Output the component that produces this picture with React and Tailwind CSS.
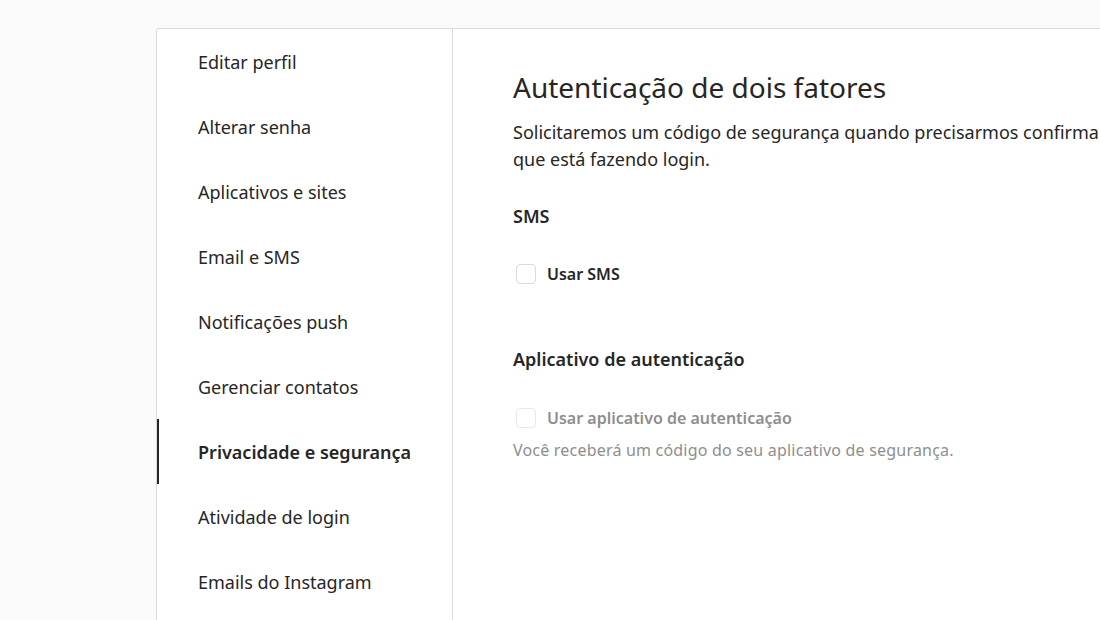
import React, { useState } from "react";

const navItems = [
    "Editar perfil",
    "Alterar senha",
    "Aplicativos e sites",
    "Email e SMS",
    "Notificações push",
    "Gerenciar contatos",
    "Privacidade e segurança",
    "Atividade de login",
    "Emails do Instagram",
];

const Checkbox = ({ checked, onChange, disabled }) => (
    <button
        type="button"
        disabled={disabled}
        onClick={onChange}
        className={`w-5 h-5 rounded-[4px] border border-[#dbdbdb] bg-white flex items-center justify-center ${disabled ? "opacity-60" : ""}`}
    >
        {checked && <span className="w-2.5 h-2.5 bg-[#0095f6] rounded-[2px]" />}
    </button>
);

const App = () => {
    const [active, setActive] = useState("Privacidade e segurança");
    const [useSms, setUseSms] = useState(false);

    return (
        <div
            className="w-[1100px] h-[620px] overflow-hidden bg-[#fafafa] pt-[28px] pl-[156px] text-[#262626]"
            style={{ fontFamily: '"Segoe UI", "Noto Sans", "Open Sans", sans-serif' }}
        >
            <div className="flex w-[980px] h-[700px] bg-white border border-[#dbdbdb] rounded-[3px]">
                <ul className="w-[296px] shrink-0 border-r border-[#dbdbdb]">
                    {navItems.map(item => (
                        <li
                            key={item}
                            onClick={() => setActive(item)}
                            className={`h-[65px] flex items-center pl-[39px] pt-[2px] text-[18px] cursor-pointer border-l-2 ${active === item ? "border-[#262626] font-semibold" : "border-transparent hover:bg-[#fafafa] hover:border-[#dbdbdb]"}`}
                        >
                            {item}
                        </li>
                    ))}
                </ul>

                <div className="flex-1 pl-[60px] pt-[38px] min-w-0">
                    <h1 className="text-[28px] leading-[40px] font-normal whitespace-nowrap">
                        Autenticação de dois fatores
                    </h1>
                    <p className="text-[18px] leading-[27px] mt-[12px] w-[700px]">
                        Solicitaremos um código de segurança quando precisarmos confirmar que é você que está fazendo login.
                    </p>

                    <h2 className="text-[18px] font-semibold leading-[24px] mt-[31px]">SMS</h2>
                    <label className="flex items-center gap-[11px] mt-[34px] ml-[3px]">
                        <Checkbox checked={useSms} onChange={() => setUseSms(!useSms)} />
                        <span className="text-[16px] font-semibold">Usar SMS</span>
                    </label>

                    <h2 className="text-[18px] font-semibold leading-[24px] mt-[61px]">Aplicativo de autenticação</h2>
                    <label className="flex items-center gap-[11px] mt-[35px] ml-[3px]">
                        <Checkbox disabled />
                        <span className="text-[16px] font-semibold text-[#8e8e8e]">Usar aplicativo de autenticação</span>
                    </label>
                    <p className="text-[16px] leading-[22px] text-[#8e8e8e] mt-[9px] tracking-[0.2px]">
                        Você receberá um código do seu aplicativo de segurança.
                    </p>
                </div>
            </div>
        </div>
    );
};

export default App;
